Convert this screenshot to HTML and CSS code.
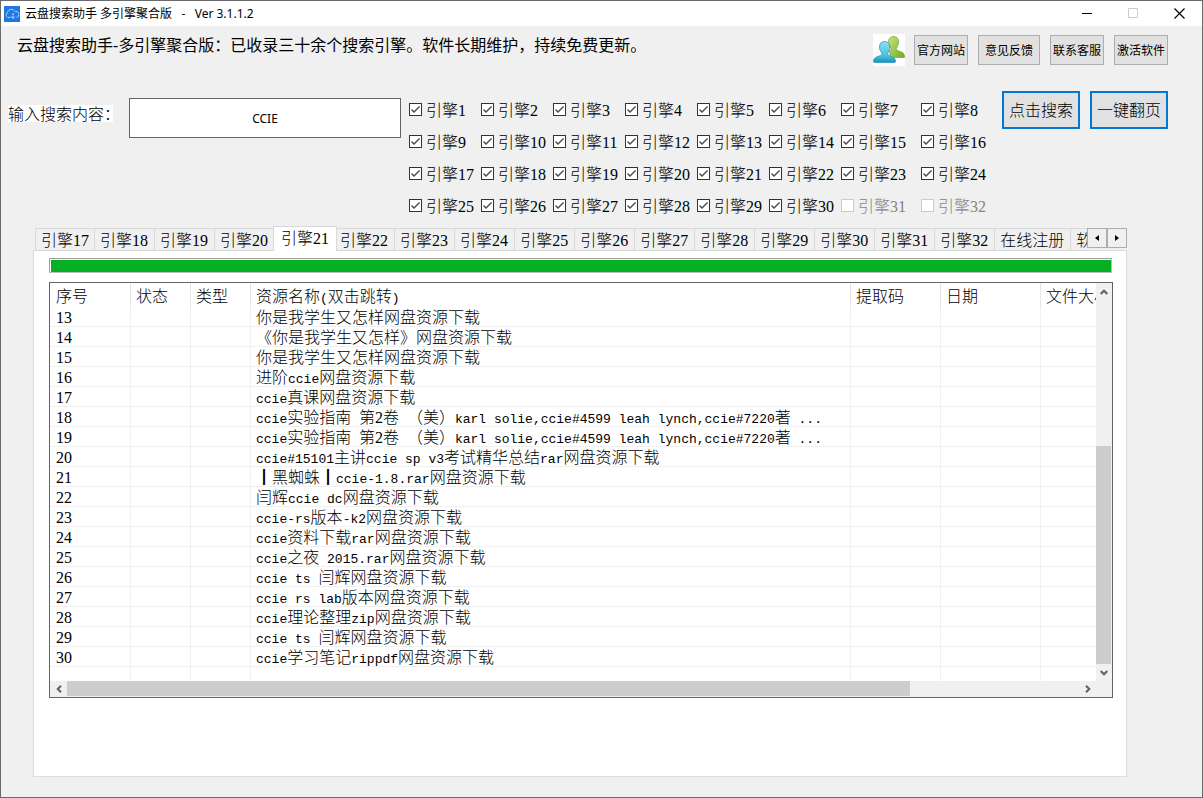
FILE: index.html
```html
<!DOCTYPE html>
<html lang="zh-CN">
<head>
<meta charset="utf-8">
<title>云盘搜索助手 多引擎聚合版</title>
<link rel="stylesheet" href="styles.css">
</head>
<body>
<div class="window">
  <header class="titlebar">
    <svg class="app-icon" width="16" height="16" viewBox="0 0 16 16"><rect width="16" height="16" fill="#1f78e0"/><path d="M6 11.500H4.500A2.500 2.500 0 0 1 3.500 6.800 4 4 0 0 1 11 5.500a3 3 0 0 1 1.500 6M9 7v5.500M7 10.500l2 2 2-2" fill="none" stroke="#d8ebff" stroke-width="1" stroke-dasharray="2 .6"/></svg>
    <span class="title">云盘搜索助手 多引擎聚合版   -   Ver 3.1.1.2</span>
    <button class="win-btn" aria-label="最小化"><svg width="11" height="11"><path d="M0 5.500h10" stroke="#000"/></svg></button>
    <button class="win-btn" aria-label="最大化" disabled><svg width="11" height="11"><path d="M.5.500h9v9h-9z" fill="none" stroke="#ccc"/></svg></button>
    <button class="win-btn" aria-label="关闭"><svg width="11" height="11"><path d="M.5.500l10 10M10.500.500l-10 10" stroke="#000" stroke-width="1.200"/></svg></button>
  </header>

  <div class="top">
    <p class="notice">云盘搜索助手-多引擎聚合版：已收录三十余个搜索引擎。软件长期维护，持续免费更新。</p>
    <svg class="users" width="32" height="32" viewBox="0 0 32 32">
      <defs>
        <linearGradient id="g" x1="0" y1="0" x2="1" y2="1"><stop offset="0" stop-color="#c6e67a"/><stop offset="1" stop-color="#6fa92a"/></linearGradient>
        <linearGradient id="b" x1="0" y1="0" x2="0" y2="1"><stop offset="0" stop-color="#93dcf3"/><stop offset=".7" stop-color="#45c0e0"/><stop offset="1" stop-color="#1c8fb5"/></linearGradient>
      </defs>
      <path d="M20.500 2.500c-3.500 0-5 2.500-5 6 0 2.500 1 4.500 2.500 5.500.6 2-.5 2.500-2 3.500l2 6h13.500c.4-3-1-4.500-3-5.500-3-1.200-4.500-1.500-5-2.500-.5-1 .3-2 .8-2.800 2-4 2.200-10.200-3.800-10.200z" fill="url(#g)" stroke="#7fae36" stroke-width=".8"/>
      <path d="M11.500 7.500c-3.500 0-5 2.500-5 5.500 0 2.500 1 4.500 2 5.500.8 1.500.3 2.500-1 3-3 1.200-7 2-7 5.500 0 1.200.3 1.500 1 1.500h20c.8 0 1-.4 1-1.500 0-3-3.500-4.200-6.500-5.500-1.500-.7-1.700-1.500-1-3 1-1.200 1.800-3 1.800-5.500 0-3-1.800-5.500-5.300-5.500z" fill="url(#b)" stroke="#3098bd" stroke-width=".8"/>
    </svg>
    <div class="links">
      <button class="btn">官方网站</button>
      <button class="btn wide">意见反馈</button>
      <button class="btn">联系客服</button>
      <button class="btn">激活软件</button>
    </div>
  </div>

  <div class="search">
    <label class="search-label" for="q">输入搜索内容：</label>
    <input class="query" id="q" type="text" value="CCIE">
    <div class="engines">
      <label class="engine"><input type="checkbox" checked>引擎1</label>
      <label class="engine"><input type="checkbox" checked>引擎2</label>
      <label class="engine"><input type="checkbox" checked>引擎3</label>
      <label class="engine"><input type="checkbox" checked>引擎4</label>
      <label class="engine"><input type="checkbox" checked>引擎5</label>
      <label class="engine"><input type="checkbox" checked>引擎6</label>
      <label class="engine"><input type="checkbox" checked>引擎7</label>
      <label class="engine"><input type="checkbox" checked>引擎8</label>
      <label class="engine"><input type="checkbox" checked>引擎9</label>
      <label class="engine"><input type="checkbox" checked>引擎10</label>
      <label class="engine"><input type="checkbox" checked>引擎11</label>
      <label class="engine"><input type="checkbox" checked>引擎12</label>
      <label class="engine"><input type="checkbox" checked>引擎13</label>
      <label class="engine"><input type="checkbox" checked>引擎14</label>
      <label class="engine"><input type="checkbox" checked>引擎15</label>
      <label class="engine"><input type="checkbox" checked>引擎16</label>
      <label class="engine"><input type="checkbox" checked>引擎17</label>
      <label class="engine"><input type="checkbox" checked>引擎18</label>
      <label class="engine"><input type="checkbox" checked>引擎19</label>
      <label class="engine"><input type="checkbox" checked>引擎20</label>
      <label class="engine"><input type="checkbox" checked>引擎21</label>
      <label class="engine"><input type="checkbox" checked>引擎22</label>
      <label class="engine"><input type="checkbox" checked>引擎23</label>
      <label class="engine"><input type="checkbox" checked>引擎24</label>
      <label class="engine"><input type="checkbox" checked>引擎25</label>
      <label class="engine"><input type="checkbox" checked>引擎26</label>
      <label class="engine"><input type="checkbox" checked>引擎27</label>
      <label class="engine"><input type="checkbox" checked>引擎28</label>
      <label class="engine"><input type="checkbox" checked>引擎29</label>
      <label class="engine"><input type="checkbox" checked>引擎30</label>
      <label class="engine off"><input type="checkbox" disabled>引擎31</label>
      <label class="engine off"><input type="checkbox" disabled>引擎32</label>
    </div>
    <div class="actions">
      <button class="btn primary">点击搜索</button>
      <button class="btn primary">一键翻页</button>
    </div>
  </div>

  <nav class="tabbar">
    <div class="tabs" role="tablist">
      <button class="tab" role="tab">引擎17</button>
      <button class="tab" role="tab">引擎18</button>
      <button class="tab" role="tab">引擎19</button>
      <button class="tab" role="tab">引擎20</button>
      <button class="tab active" role="tab" aria-selected="true">引擎21</button>
      <button class="tab" role="tab">引擎22</button>
      <button class="tab" role="tab">引擎23</button>
      <button class="tab" role="tab">引擎24</button>
      <button class="tab" role="tab">引擎25</button>
      <button class="tab" role="tab">引擎26</button>
      <button class="tab" role="tab">引擎27</button>
      <button class="tab" role="tab">引擎28</button>
      <button class="tab" role="tab">引擎29</button>
      <button class="tab" role="tab">引擎30</button>
      <button class="tab" role="tab">引擎31</button>
      <button class="tab" role="tab">引擎32</button>
      <button class="tab" role="tab">在线注册</button>
      <button class="tab" role="tab">软件</button>
    </div>
    <button class="spin" aria-label="向左"><svg width="4" height="6"><path d="M4 0v6L0 3z"/></svg></button>
    <button class="spin" aria-label="向右"><svg width="4" height="6"><path d="M0 0v6l4-3z"/></svg></button>
  </nav>

  <main class="panel">
    <div class="progress" role="progressbar" aria-valuenow="100"><div class="bar"></div></div>
    <div class="list">
      <div class="rows">
        <table>
          <colgroup><col class="c-no"><col class="c-sm"><col class="c-sm"><col><col class="c-code"><col class="c-date"><col class="c-size"></colgroup>
          <thead><tr><th>序号</th><th>状态</th><th>类型</th><th>资源名称<span class="m">(</span>双击跳转<span class="m">)</span></th><th>提取码</th><th>日期</th><th>文件大小</th></tr></thead>
          <tbody>
            <tr><td>13</td><td></td><td></td><td>你是我学生又怎样网盘资源下载</td><td></td><td></td><td></td></tr>
            <tr><td>14</td><td></td><td></td><td>《你是我学生又怎样》网盘资源下载</td><td></td><td></td><td></td></tr>
            <tr><td>15</td><td></td><td></td><td>你是我学生又怎样网盘资源下载</td><td></td><td></td><td></td></tr>
            <tr><td>16</td><td></td><td></td><td>进阶<span class="m">ccie</span>网盘资源下载</td><td></td><td></td><td></td></tr>
            <tr><td>17</td><td></td><td></td><td><span class="m">ccie</span>真课网盘资源下载</td><td></td><td></td><td></td></tr>
            <tr><td>18</td><td></td><td></td><td><span class="m">ccie</span>实验指南<span class="m"> </span>第2卷<span class="m"> </span>（美）<span class="m">karl solie,ccie#4599 leah lynch,ccie#7220</span>著<span class="m"> ...</span></td><td></td><td></td><td></td></tr>
            <tr><td>19</td><td></td><td></td><td><span class="m">ccie</span>实验指南<span class="m"> </span>第2卷<span class="m"> </span>（美）<span class="m">karl solie,ccie#4599 leah lynch,ccie#7220</span>著<span class="m"> ...</span></td><td></td><td></td><td></td></tr>
            <tr><td>20</td><td></td><td></td><td><span class="m">ccie#15101</span>主讲<span class="m">ccie sp v3</span>考试精华总结<span class="m">rar</span>网盘资源下载</td><td></td><td></td><td></td></tr>
            <tr><td>21</td><td></td><td></td><td>┃黑蜘蛛┃<span class="m">ccie-1.8.rar</span>网盘资源下载</td><td></td><td></td><td></td></tr>
            <tr><td>22</td><td></td><td></td><td>闫辉<span class="m">ccie dc</span>网盘资源下载</td><td></td><td></td><td></td></tr>
            <tr><td>23</td><td></td><td></td><td><span class="m">ccie-rs</span>版本<span class="m">-k2</span>网盘资源下载</td><td></td><td></td><td></td></tr>
            <tr><td>24</td><td></td><td></td><td><span class="m">ccie</span>资料下载<span class="m">rar</span>网盘资源下载</td><td></td><td></td><td></td></tr>
            <tr><td>25</td><td></td><td></td><td><span class="m">ccie</span>之夜<span class="m"> 2015.rar</span>网盘资源下载</td><td></td><td></td><td></td></tr>
            <tr><td>26</td><td></td><td></td><td><span class="m">ccie ts </span>闫辉网盘资源下载</td><td></td><td></td><td></td></tr>
            <tr><td>27</td><td></td><td></td><td><span class="m">ccie rs lab</span>版本网盘资源下载</td><td></td><td></td><td></td></tr>
            <tr><td>28</td><td></td><td></td><td><span class="m">ccie</span>理论整理<span class="m">zip</span>网盘资源下载</td><td></td><td></td><td></td></tr>
            <tr><td>29</td><td></td><td></td><td><span class="m">ccie ts </span>闫辉网盘资源下载</td><td></td><td></td><td></td></tr>
            <tr><td>30</td><td></td><td></td><td><span class="m">ccie</span>学习笔记<span class="m">rippdf</span>网盘资源下载</td><td></td><td></td><td></td></tr>
            <tr class="rest"><td></td><td></td><td></td><td></td><td></td><td></td><td></td></tr>
          </tbody>
        </table>
      </div>
      <div class="vbar">
        <button class="arrow" aria-label="向上滚动"><svg width="8" height="6"><path d="M.7 5L4 1.700 7.300 5"/></svg></button>
        <div class="vthumb"></div>
        <button class="arrow" aria-label="向下滚动"><svg width="8" height="6"><path d="M.7 1L4 4.300 7.300 1"/></svg></button>
      </div>
      <div class="hbar">
        <button class="arrow" aria-label="向左滚动"><svg width="6" height="8"><path d="M5 .7L1.700 4 5 7.300"/></svg></button>
        <div class="track"><div class="hthumb"></div></div>
        <button class="arrow" aria-label="向右滚动"><svg width="6" height="8"><path d="M1 .7L4.300 4 1 7.300"/></svg></button>
      </div>
    </div>
  </main>
</div>
</body>
</html>
```
FILE: styles.css
```css
* { box-sizing: border-box; }

body {
  margin: 0;
  color: #000;
  font: 300 16px/20px "Liberation Serif", "Noto Sans CJK SC", serif;
}

button, input { font: inherit; color: inherit; }
button { margin: 0; padding: 0; white-space: nowrap; }
svg { display: block; }

.window {
  display: flex;
  flex-direction: column;
  min-height: 100vh;
  border: 1px solid #6b6b6b;
  background: #f0f0f0;
}

/* title bar */
.titlebar {
  display: flex;
  align-items: center;
  height: 25px;
  padding-left: 3px;
  background: #fff;
}
.title {
  flex: 1;
  margin-left: 5px;
  font: 12px/20px "Noto Sans", "Noto Sans CJK SC", sans-serif;
  white-space: pre;
}
.win-btn {
  display: flex;
  align-items: center;
  justify-content: center;
  width: 46px;
  height: 24px;
  border: 0;
  background: none;
}

/* notice and links */
.top {
  display: flex;
  align-items: flex-start;
  padding: 8px 34px 0 16px;
}
.notice {
  flex: 1;
  margin: 1px 0 0;
  font: 16px/20px "Noto Sans", "Noto Sans CJK SC", sans-serif;
}
.users { background: #fff; }
.links {
  display: flex;
  gap: 10px;
  margin: 1px 0 0 9px;
}
.btn {
  width: 54px;
  height: 30px;
  padding-top: 2px;
  border: 1px solid #adadad;
  background: #e1e1e1;
  font-size: 12px;
  font-weight: 400;
}
.btn.wide { width: 62px; }
.btn.primary {
  width: 78px;
  height: 38px;
  border: 2px solid #0078d7;
  font-size: 16px;
  font-weight: 300;
}

/* search row */
.search {
  display: flex;
  align-items: flex-start;
  padding: 25px 34px 0 7px;
}
.search-label {
  width: 105px;
  height: 17px;
  margin: 14px 16px 0 0;
  background: #fff;
  line-height: 19px;
  white-space: nowrap;
}
.query {
  flex: 1;
  min-width: 100px;
  height: 40px;
  margin: 7px 8px 0 0;
  border: 1px solid #646464;
  background: #fff;
  font: 12px/20px "Noto Sans", "Noto Sans CJK SC", sans-serif;
  text-align: center;
}
.engines {
  display: grid;
  grid-template-columns: repeat(6, 72px) 80px 72px;
  grid-auto-rows: 32px;
  margin-top: 3px;
}
.engine {
  display: flex;
  align-items: center;
  gap: 4px;
  padding-top: 2px;
  white-space: nowrap;
}
.engine input {
  appearance: none;
  width: 13px;
  height: 13px;
  margin: 0 0 4px;
  border: 1px solid #333;
  background: #fff;
}
.engine input:checked {
  background: #fff url("data:image/svg+xml,%3Csvg xmlns='http://www.w3.org/2000/svg' width='11' height='11'%3E%3Cpath d='M1.500 5.500l2.500 2.500 5.500-5.500' fill='none' stroke='%23444' stroke-width='1.300'/%3E%3C/svg%3E");
}
.engine.off { color: #838383; }
.engine.off input { border-color: #ccc; }
.actions {
  display: flex;
  gap: 10px;
  margin-left: 9px;
}

/* tabs */
.tabbar {
  display: flex;
  align-items: flex-start;
  height: 24px;
  margin: 4px 75px 0 34px;
}
.tabs {
  display: flex;
  flex: 1;
  align-items: flex-end;
  height: 25px;
  overflow: hidden;
  min-width: 0;
  position: relative;
  z-index: 1;
}
.tab {
  flex: none;
  height: 23px;
  padding: 2px 6px 0 5px;
  border: 1px solid #d9d9d9;
  border-left: 0;
  background: #f0f0f0;
}
.tab:first-child { border-left: 1px solid #d9d9d9; padding-right: 5px; }
.tab.active {
  z-index: 1;
  height: 25px;
  margin: 0 -2px;
  padding: 0 7px 1px;
  border-left: 1px solid #d9d9d9;
  border-bottom: 0;
  background: #fff;
}
.spin {
  display: flex;
  align-items: center;
  justify-content: center;
  width: 20px;
  height: 20px;
  margin-top: 2px;
  border: 1px solid #adadad;
  background: #f0f0f0;
}

/* tab page */
.panel {
  flex: 1;
  margin: 0 75px 20px 32px;
  padding: 7px 13px 20px 15px;
  border: 1px solid #dcdcdc;
  background: #fff;
}
.progress {
  height: 15px;
  margin-right: 1px;
  padding: 1px 0 0 1px;
  border: 1px solid #bcbcbc;
  border-top-color: #a0a0a0;
  border-left-color: #a0a0a0;
}
.bar { height: 100%; background: #06b025; }

/* result list */
.list {
  display: grid;
  grid-template-columns: 1fr 16px;
  grid-template-rows: auto 16px;
  margin-top: 9px;
  border: 1px solid #646464;
  background: #fff;
}
.rows { min-width: 0; overflow: hidden; }
table {
  width: 100%;
  table-layout: fixed;
  border-collapse: separate;
  border-spacing: 0;
}
.c-no { width: 81px; }
.c-sm { width: 60px; }
.c-code { width: 90px; }
.c-date { width: 100px; }
.c-size { width: 55px; }
th, td {
  height: 20px;
  padding: 2px 0 0 5px;
  overflow: hidden;
  border-right: 1px solid #f0f0f0;
  border-bottom: 1px solid #f0f0f0;
  font-weight: 300;
  line-height: 17px;
  text-align: left;
  white-space: pre;
}
th { height: 24px; border-right-color: #e5e5e5; border-bottom: 0; }
th:first-child, td:first-child { padding-left: 6px; }
th:last-child, td:last-child { border-right: 0; }
.rest td { height: 14px; padding: 0; border-bottom: 0; }
.m { font: 13px/10px "Liberation Mono", monospace; }

/* scroll bars */
.vbar {
  display: flex;
  flex-direction: column;
  justify-content: space-between;
  background: #f0f0f0;
}
.arrow {
  display: flex;
  align-items: center;
  justify-content: center;
  flex: none;
  width: 17px;
  height: 17px;
  border: 0;
  background: none;
}
.arrow path { fill: none; stroke: #606060; stroke-width: 2; }
.vbar .arrow { width: 16px; }
.vthumb { width: 15px; height: 218px; margin-top: auto; background: #cdcdcd; }
.hbar {
  grid-column: 1 / -1;
  display: flex;
  padding-right: 16px;
  background: #f0f0f0;
}
.hbar .arrow { height: 16px; }
.track { flex: 1; }
.hthumb { width: 83.3%; height: 15px; background: #cdcdcd; }
```
